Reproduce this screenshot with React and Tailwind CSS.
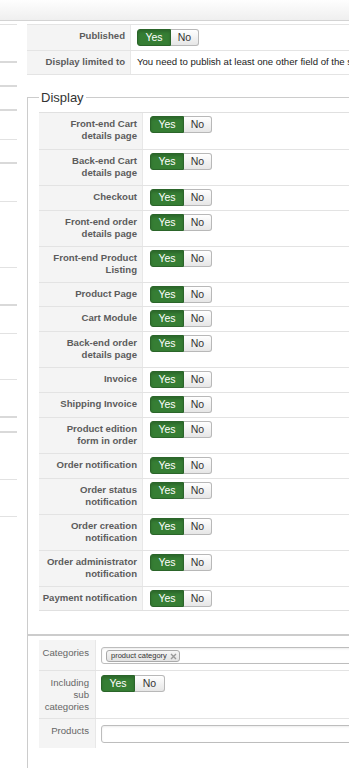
import React from "react";

const sideItems = [
  [4, 1], [38, 2], [24, 2], [24, 2], [29, 1], [24, 2], [38, 1], [66, 1],
  [38, 2], [28, 1], [46, 1], [38, 2], [15, 2], [47, 1], [37, 1],
];

const displayRows = [
  [["Front-end Cart", "details page"], 36],
  [["Back-end Cart", "details page"], 36],
  [["Checkout"], 25],
  [["Front-end order", "details page"], 36],
  [["Front-end Product", "Listing"], 36],
  [["Product Page"], 24],
  [["Cart Module"], 25],
  [["Back-end order", "details page"], 36],
  [["Invoice"], 25],
  [["Shipping Invoice"], 25],
  [["Product edition", "form in order"], 36],
  [["Order notification"], 25],
  [["Order status", "notification"], 36],
  [["Order creation", "notification"], 36],
  [["Order administrator", "notification"], 36],
  [["Payment notification"], 24],
];

function YesNo({ noWidth = "w-[28px]", h = "h-[17px]" }) {
  return (
    <div className={`flex ${h} text-[10.5px] leading-none`}>
      <span className="flex w-[34px] items-center justify-center rounded-l-[3px] border border-[#2b652a] bg-[#367e34] text-white shadow-[inset_0_2px_3px_rgba(0,0,0,0.18)]">
        Yes
      </span>
      <span
        className={`flex ${noWidth} items-center justify-center rounded-r-[3px] border border-l-0 border-[#b8b8b8] bg-gradient-to-b from-white to-[#e6e6e6] text-[#333]`}
      >
        No
      </span>
    </div>
  );
}

function Lines({ lines }) {
  return lines.map((l, i) => (
    <span key={i} className="block whitespace-nowrap">
      {l}
    </span>
  ));
}

export default function App() {
  return (
    <div className="min-h-screen w-full overflow-hidden bg-white font-['Liberation_Sans',Arial,sans-serif]">
      <div className="w-[760px]">
        {/* header bar */}
        <div className="h-[21px] border-b border-[#d3d3d3] bg-gradient-to-b from-[#fefefe] to-[#efefef]" />

        <div className="flex">
          {/* left sidebar */}
          <div className="flex w-[17px] shrink-0 flex-col">
            {sideItems.map(([h, b], i) => (
              <div
                key={i}
                style={{ height: h, borderBottomWidth: b }}
                className={`border-solid ${b === 2 ? "border-[#d9d9d9]" : "border-[#e2e2e2]"}`}
              />
            ))}
          </div>

          {/* main */}
          <div className="ml-[10px] flex-1">
            {/* top table */}
            <div className="mt-[3px] border-y border-[#e4e4e4]">
              <div className="flex h-[25px]">
                <div className="w-[104px] shrink-0 border-r border-[#e8e8e8] bg-[#f4f4f4] pr-[5px] pt-[5px] text-right text-[9.6px] font-bold leading-[12px] text-[#5c5c5c]">
                  Published
                </div>
                <div className="flex items-start pl-[6px] pt-[4px]">
                  <YesNo />
                </div>
              </div>
              <div className="flex h-[24px] border-t border-[#e4e4e4]">
                <div className="w-[104px] shrink-0 border-r border-[#e8e8e8] bg-[#f4f4f4] pr-[5px] pt-[5px] text-right text-[9.6px] font-bold leading-[12px] text-[#5c5c5c]">
                  Display limited to
                </div>
                <div className="whitespace-nowrap pl-[6px] pt-[5px] text-[9.6px] leading-[12px] text-[#222]">
                  You need to publish at least one other field of the same type to be able to use this option.
                </div>
              </div>
            </div>

            {/* Display fieldset */}
            <fieldset className="mt-[15px] border border-b border-[#cccccc] px-[11px] pb-[23px] pt-[7px]">
              <legend className="px-[2px] text-[13px] leading-[15px] text-[#333]">Display</legend>
              <div className="border-y border-[#e0e0e0]">
                {displayRows.map(([lines, h], i) => (
                  <div
                    key={i}
                    style={{ height: h }}
                    className={`flex ${i > 0 ? "border-t border-[#e3e3e3]" : ""}`}
                  >
                    <div className="w-[104px] shrink-0 border-r border-[#e8e8e8] bg-[#f4f4f4] pr-[5px] pt-[5px] text-right text-[9.6px] font-bold leading-[12px] text-[#5c5c5c]">
                      <Lines lines={lines} />
                    </div>
                    <div className="flex items-start pl-[7px] pt-[3px]">
                      <YesNo />
                    </div>
                  </div>
                ))}
              </div>
            </fieldset>

            {/* second fieldset */}
            <fieldset className="border border-[#cccccc] px-[11px] pb-[40px] pt-[4px]">
              <div>
                <div className="flex h-[30px]">
                  <div className="w-[57px] shrink-0 border-r border-[#e8e8e8] bg-[#f4f4f4] pr-[6px] pt-[7px] text-right text-[9.6px] leading-[12px] text-[#666]">
                    Categories
                  </div>
                  <div className="flex-1 pl-[5px] pt-[7px]">
                    <div className="flex h-[17px] w-full items-start rounded-[3px] border border-[#bdbdbd] bg-white shadow-[inset_0_1px_2px_rgba(0,0,0,0.08)]">
                      <span className="ml-[4px] mt-[2px] flex h-[12px] items-center gap-[3px] rounded-[3px] border border-[#aaaaaa] bg-gradient-to-b from-[#f6f6f6] to-[#e2e2e2] pl-[4px] pr-[2px] text-[7.5px] leading-none text-[#333]">
                        product category
                        <svg width="7" height="7" viewBox="0 0 7 7" className="block">
                          <path d="M1 1 L6 6 M6 1 L1 6" stroke="#999" strokeWidth="1.4" />
                        </svg>
                      </span>
                    </div>
                  </div>
                </div>
                <div className="flex h-[48px] border-t border-[#e3e3e3]">
                  <div className="w-[57px] shrink-0 border-r border-[#e8e8e8] bg-[#f4f4f4] pr-[6px] pt-[6px] text-right text-[9.6px] leading-[12px] text-[#666]">
                    <Lines lines={["Including", "sub", "categories"]} />
                  </div>
                  <div className="flex items-start pl-[5px] pt-[4px]">
                    <YesNo noWidth="w-[30px]" h="h-[17px]" />
                  </div>
                </div>
                <div className="flex h-[30px] border-t border-[#e3e3e3]">
                  <div className="w-[57px] shrink-0 border-r border-[#e8e8e8] bg-[#f4f4f4] pr-[6px] pt-[6px] text-right text-[9.6px] leading-[12px] text-[#666]">
                    Products
                  </div>
                  <div className="flex-1 pl-[5px] pt-[6px]">
                    <div className="h-[18px] w-full rounded-[3px] border border-[#bdbdbd] bg-white shadow-[inset_0_1px_2px_rgba(0,0,0,0.08)]" />
                  </div>
                </div>
              </div>
            </fieldset>
          </div>
        </div>
      </div>
    </div>
  );
}
